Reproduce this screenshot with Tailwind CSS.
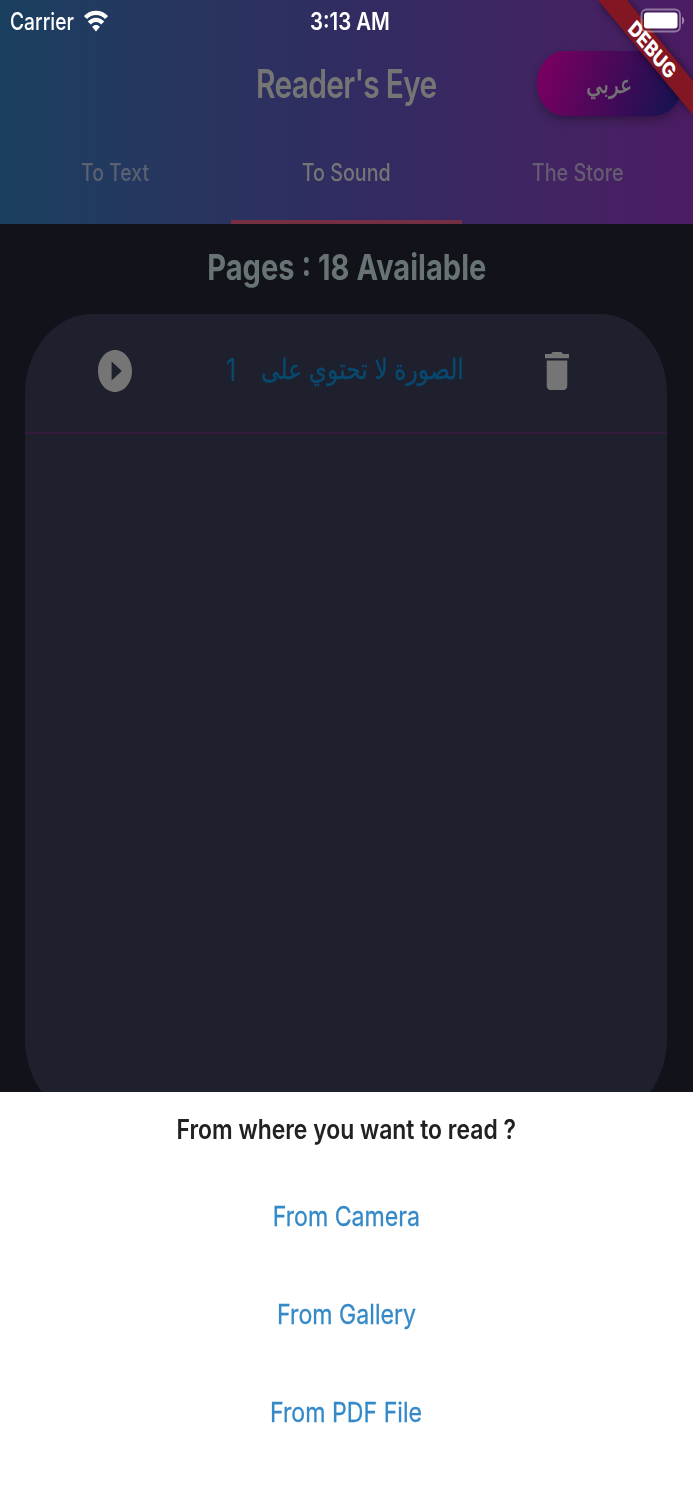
<!DOCTYPE html>
<html lang="en">
<head>
    <meta charset="UTF-8">
    <meta name="viewport" content="width=device-width, initial-scale=1.0">
    <title>Reader's Eye</title>
    <script src="https://cdn.jsdelivr.net/npm/@tailwindcss/browser@4"></script>
</head>
<body class="bg-[#11121a]">

    <div class="relative w-full h-[1500px] overflow-hidden flex flex-col font-['Inter','DejaVu_Sans',sans-serif]">

        <!-- app bar -->
        <header class="h-[224px] shrink-0 flex flex-col bg-linear-to-r from-[#193f5f] via-[#302c61] to-[#4b1c63]">
            <div class="h-11 grid grid-cols-3 items-center text-white text-2xl">
                <div class="flex items-center pl-[10px]">
                    <span class="w-[64px] whitespace-nowrap font-medium"><span class="inline-block origin-left scale-x-[0.8]">Carrier</span></span>
                    <svg class="ml-[10px] -mt-[3px] w-6 h-[22px]" viewBox="0 0 24 22" fill="none" stroke="#fff" stroke-width="4.200">
                        <path d="M1.500 7.500C7.200 1.200 16.800 1.200 22.500 7.500"/>
                        <path d="M5.300 13C9.200 8.800 14.800 8.800 18.700 13"/>
                        <path d="M12 21.500L8.200 17C10 14.400 14 14.400 15.800 17Z" fill="#fff" stroke="none"/>
                    </svg>
                </div>
                <div class="text-center pl-[7px] font-semibold"><span class="inline-block scale-x-[0.85]">3:13 AM</span></div>
            </div>
            <div class="h-20 grid grid-cols-[1fr_231px_1fr] items-center">
                <div></div>
                <h1 class="-mt-[2px] text-center text-[39px] leading-none font-semibold tracking-tight text-[#757575] whitespace-nowrap -mx-6"><span class="inline-block scale-x-[0.77]">Reader's Eye</span></h1>
                <div class="flex justify-end pr-[11px] -mt-[2px]">
                    <button class="w-[145px] h-[65px] pt-1 rounded-[28px/33px] bg-linear-[108deg] from-[#750060] from-10% to-[#101450] text-[#757575] text-[25px] shadow-[0_4px_8px_rgba(0,0,0,0.3)] [-webkit-text-stroke:0.5px_#757575]" lang="ar" dir="rtl"><span class="inline-block scale-x-[0.81]">عربي</span></button>
                </div>
            </div>
            <nav class="flex-1 grid grid-cols-3 text-2xl font-medium text-center">
                <div class="pt-[33px] text-[#5b6170]"><span class="inline-block scale-x-[0.81]">To Text</span></div>
                <div class="pt-[33px] text-[#757575] border-b-4 border-[#743042]"><span class="inline-block scale-x-[0.82]">To Sound</span></div>
                <div class="pt-[33px] text-[#665b70]"><span class="inline-block scale-x-[0.825]">The Store</span></div>
            </nav>
        </header>

        <!-- pages list -->
        <main class="h-[868px] shrink-0 overflow-hidden">
            <h2 class="h-[90px] pt-[19px] text-center text-[36px] leading-[48px] font-bold text-[#687374] whitespace-nowrap"><span class="inline-block scale-x-[0.808]">Pages : 18 Available</span></h2>
            <div class="ml-[25px] mr-[26px] h-[805px] rounded-[67px/80px] bg-[#1f202e]">
                <div class="h-[120px] border-b-2 border-[#321b3d] flex items-center">
                    <div class="w-[180px] shrink-0 flex justify-center">
                        <svg class="w-[34px] h-[42px] -mt-[4px]" viewBox="2 2 20 20" preserveAspectRatio="none">
                            <path fill="#757575" d="M12 2C6.480 2 2 6.480 2 12s4.480 10 10 10 10-4.480 10-10S17.520 2 12 2zm-2 14.500v-9l6 4.500-6 4.500z"/>
                        </svg>
                    </div>
                    <div class="flex-1 flex items-center pl-[21px] text-[#08496f] text-[31px] leading-none whitespace-nowrap -mt-[8px]">
                        <span class="shrink-0 w-[10px] mr-[24px]"><span class="inline-block origin-left scale-x-[0.8]">1</span></span>
                        <span class="shrink-0 w-[204px] flex justify-center text-[28px] [-webkit-text-stroke:0.4px_#08496f]" lang="ar" dir="rtl"><span class="inline-block scale-x-[0.835]">الصورة لا تحتوي على</span></span>
                    </div>
                    <div class="shrink-0 flex justify-end pr-[98px]">
                        <svg class="w-6 h-[38px] -mt-[4px]" viewBox="5 3 14 18" preserveAspectRatio="none">
                            <path fill="#757575" d="M6 19c0 1.100.9 2 2 2h8c1.100 0 2-.9 2-2V7H6v12zM19 4h-3.500l-1-1h-5l-1 1H5v2h14V4z"/>
                        </svg>
                    </div>
                </div>
            </div>
        </main>

        <!-- bottom sheet -->
        <section class="flex-1 bg-white text-center text-[26.500px] leading-8 whitespace-nowrap">
            <p class="pt-[21px] h-[108px] font-semibold text-[#212121]"><span class="inline-block scale-x-[0.865]">From where you want to read ?</span></p>
            <div class="flex flex-col gap-[66px] text-[#3489c8] [-webkit-text-stroke:0.3px_#3489c8]">
                <a href="#"><span class="inline-block scale-x-[0.873]">From Camera</span></a>
                <a href="#"><span class="inline-block scale-x-[0.873]">From Gallery</span></a>
                <a href="#"><span class="inline-block scale-x-[0.873]">From PDF File</span></a>
            </div>
        </section>

        <!-- debug ribbon -->
        <svg class="absolute top-0 right-0 w-[103px] h-[125px] overflow-hidden" viewBox="590 0 103 125">
            <defs>
                <filter id="soft" x="-20%" y="-20%" width="140%" height="140%"><feGaussianBlur stdDeviation="4"/></filter>
            </defs>
            <path d="M598 0H627L693 81V115Z" fill="#000" opacity=".5" filter="url(#soft)"/>
            <path d="M598 0H627L693 81V115Z" fill="#831623"/>
            <text transform="translate(652 50) scale(1 1.21) rotate(45)" x="0" y="6" text-anchor="middle" textLength="59" lengthAdjust="spacingAndGlyphs" font-size="18" font-weight="800" fill="#fff">DEBUG</text>
        </svg>

        <!-- battery -->
        <svg class="absolute top-[8px] right-[8px] w-[45px] h-[26px]" viewBox="640 8 45 26">
            <rect x="641.500" y="9.500" width="38.500" height="22" rx="5" fill="none" stroke="#fff" stroke-opacity=".4" stroke-width="1.800"/>
            <rect x="644" y="12.500" width="33.500" height="16" rx="3" fill="#fff"/>
            <path d="M682 16.500C685 18 685 23 682 24.500Z" fill="#fff" fill-opacity=".45"/>
        </svg>
    </div>

</body>
</html>
